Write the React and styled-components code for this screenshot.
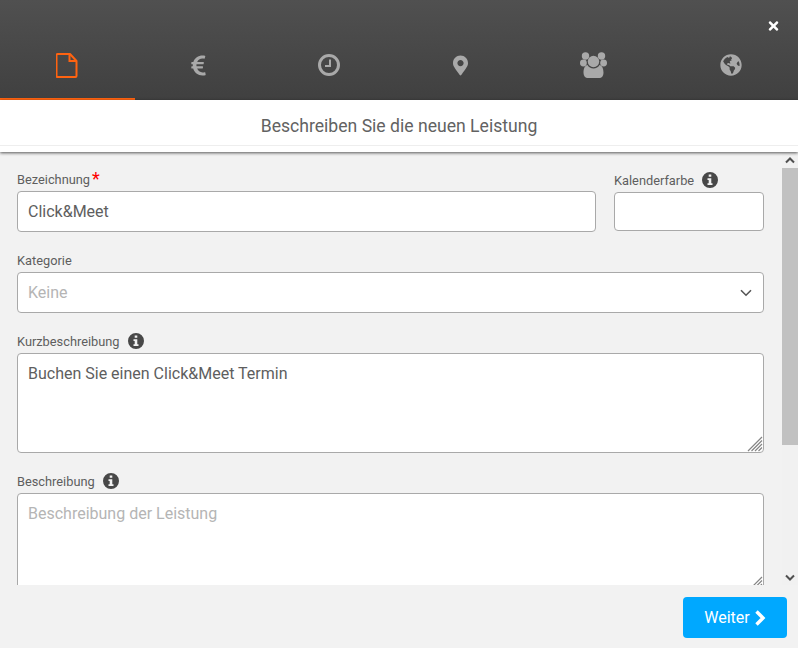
import React from "react";
import styled, { createGlobalStyle } from "styled-components";
import { FaEuroSign, FaGlobeAmericas, FaMapMarkerAlt, FaTimes } from "react-icons/fa";

const GlobalStyle = createGlobalStyle`
  html, body {
    margin: 0;
    padding: 0;
    background: #f2f2f2;
  }
  * {
    box-sizing: border-box;
  }
`;

const Page = styled.div`
  width: 798px;
  height: 648px;
  display: flex;
  flex-direction: column;
  overflow: hidden;
  position: relative;
  font-family: Roboto, "Liberation Sans", sans-serif;
  color: #5e5e5e;
  background: #f2f2f2;
`;

const Header = styled.header`
  height: 100px;
  flex: none;
  display: flex;
  align-items: flex-end;
  background: linear-gradient(#505050, #404040);
`;

const Tab = styled.div`
  flex: 1 1 auto;
  height: 70px;
  display: flex;
  justify-content: center;
  padding-top: 22px;
  color: ${(props) => (props.$active ? "#ff6310" : "#a9a9a9")};
  border-bottom: 2px solid ${(props) => (props.$active ? "#ff6310" : "transparent")};
`;

const TabIcon = styled.span`
  width: ${(props) => props.$width}px;
  height: 26px;
  display: flex;
  align-items: center;
  justify-content: center;
`;

const CloseButton = styled.button`
  position: absolute;
  top: 19px;
  right: 18px;
  width: 13px;
  height: 14px;
  padding: 0;
  border: 0;
  background: none;
  color: #fff;
  display: flex;
  align-items: center;
  justify-content: center;
`;

const SubHeader = styled.div`
  height: 52px;
  flex: none;
  padding-bottom: 6px;
  background: #fff;
  box-shadow: 0 1px 3px rgba(0, 0, 0, 0.65);
  position: relative;
  z-index: 1;
`;

const Title = styled.h1`
  height: 46px;
  margin: 0;
  padding-top: 6px;
  display: flex;
  align-items: center;
  justify-content: center;
  border-bottom: 1px solid #eee;
  font-size: 17.6px;
  font-weight: 400;
  color: #626262;
`;

const Main = styled.div`
  height: 433px;
  flex: none;
  display: flex;
`;

const Form = styled.form`
  flex: 1;
  min-width: 0;
  overflow: hidden;
  padding: 18px 18px 0 17px;
  display: flex;
  flex-direction: column;
  gap: 19px;
`;

const Row = styled.div`
  display: grid;
  grid-template-columns: 579px 150px;
  column-gap: 18px;
  align-items: center;
`;

const Field = styled.div`
  display: flex;
  flex-direction: column;
  gap: 3px;
  flex: none;
`;

const Label = styled.label`
  height: 18px;
  display: flex;
  align-items: center;
  gap: 8px;
  font-size: 12.8px;
  color: #5e5e5e;
`;

const Required = styled.span`
  margin-left: -6px;
  font-size: 18px;
  line-height: 18px;
  height: 18px;
  color: #f00;
`;

const TextInput = styled.input`
  width: 100%;
  height: ${(props) => props.$height || 41}px;
  padding: 0 10px;
  display: block;
  border: 1px solid #a9a9a9;
  border-radius: 4px;
  background: #fff;
  outline: none;
  font-family: inherit;
  font-size: 16px;
  color: #5e5e5e;
`;

const SelectBox = styled.div`
  height: 41px;
  padding: 0 11px 0 10px;
  display: flex;
  align-items: center;
  justify-content: space-between;
  border: 1px solid #a9a9a9;
  border-radius: 4px;
  background: #fff;
  font-size: 16px;
  color: #b5b5b5;
`;

const AreaWrap = styled.div`
  position: relative;
  height: 100px;
`;

const TextArea = styled.textarea`
  width: 100%;
  height: 100%;
  padding: 10px;
  display: block;
  border: 1px solid #a9a9a9;
  border-radius: 4px;
  background: #fff;
  outline: none;
  resize: none;
  font-family: inherit;
  font-size: 16px;
  line-height: 20px;
  color: #5e5e5e;
  &::placeholder {
    color: #b5b5b5;
    opacity: 1;
  }
`;

const Grip = styled.svg`
  position: absolute;
  right: 1px;
  bottom: 1px;
  pointer-events: none;
`;

const Scrollbar = styled.div`
  width: 16px;
  flex: none;
  display: flex;
  flex-direction: column;
  background: #f1f1f1;
`;

const ScrollButton = styled.div`
  height: 16px;
  flex: none;
  display: flex;
  align-items: center;
  justify-content: center;
  color: #505050;
`;

const ScrollThumb = styled.div`
  height: 277px;
  flex: none;
  background: #c1c1c1;
`;

const ScrollSpace = styled.div`
  flex: 1;
`;

const Footer = styled.footer`
  flex: 1;
  display: flex;
  align-items: flex-start;
  justify-content: flex-end;
  padding: 12px 11px 0 0;
`;

const NextButton = styled.button`
  width: 104px;
  height: 41px;
  padding: 0;
  display: flex;
  align-items: center;
  justify-content: center;
  gap: 4px;
  border: 0;
  border-radius: 4px;
  background: #00a8ff;
  color: #fff;
  font-family: inherit;
  font-size: 16px;
`;

const FileIcon = () => (
  <svg width="22" height="25" viewBox="0 0 22 25" fill="none">
    <path
      d="M1.5 1h12.5l6.5 7v15a1 1 0 0 1-1 1h-18a1 1 0 0 1-1-1v-21a1 1 0 0 1 1-1z"
      stroke="currentColor"
      strokeWidth="2"
      strokeLinejoin="round"
    />
    <path d="M13.5 1.5v6.5h6.5" stroke="currentColor" strokeWidth="2" />
  </svg>
);

const ClockIcon = () => (
  <svg width="22" height="22" viewBox="0 0 22 22" fill="none">
    <circle cx="11" cy="11" r="9.5" stroke="currentColor" strokeWidth="3" />
    <path d="M12 5.5v6.5h-5" stroke="currentColor" strokeWidth="2" />
  </svg>
);

const UsersIcon = () => (
  <svg width="27" height="26" viewBox="0 0 27 26" fill="currentColor">
    <circle cx="5.5" cy="4" r="3.7" />
    <circle cx="21.5" cy="4" r="3.7" />
    <circle cx="3.4" cy="11" r="3.4" />
    <circle cx="23.6" cy="11" r="3.4" />
    <circle cx="13.5" cy="9.5" r="5.7" />
    <path d="M3.5 21c0-5 1.5-7.5 4-8 1 2 3.5 3.5 6 3.5s5-1.5 6-3.5c2.5.5 4 3 4 8 0 3-2 5-4 5h-12c-2 0-4-2-4-5z" />
  </svg>
);

// the serif "i" of the label hints is cut out of the disc
const InfoIcon = () => (
  <svg width="16" height="16" viewBox="0 0 16 16" fill="#484848">
    <path
      fillRule="evenodd"
      d="M8 0a8 8 0 1 1 0 16A8 8 0 0 1 8 0zM6.7 2.6v2.2h2.6V2.6zM5.5 6.2v1.8h1.2v3.2H5.5V13h5v-1.8H9.3V6.2z"
    />
  </svg>
);

// thin chevron of the select box
const SelectArrow = () => (
  <svg width="12" height="8" viewBox="0 0 12 8" fill="none">
    <path d="M1 1.2l5 5 5-5" stroke="#555" strokeWidth="1.6" />
  </svg>
);

const ScrollArrow = ({ up }) => (
  <svg width="10" height="7" viewBox="0 0 10 7" fill="none">
    <path
      d={up ? "M1 5.5l4-4 4 4" : "M1 1.5l4 4 4-4"}
      stroke="currentColor"
      strokeWidth="2"
    />
  </svg>
);

const NextArrow = () => (
  <svg width="12" height="16" viewBox="0 0 12 16" fill="none">
    <path d="M2.5 1.5l6.5 6.5-6.5 6.5" stroke="currentColor" strokeWidth="3.4" />
  </svg>
);

const ResizeGrip = () => (
  <Grip width="16" height="16" viewBox="0 0 16 16" stroke="#858585" strokeWidth="1.2">
    <path d="M1 15L15 1M4.5 15L15 4.5M8 15l7-7M11.5 15l3.5-3.5" />
  </Grip>
);

const tabs = [
  { key: "details", width: 22, icon: <FileIcon />, active: true },
  { key: "price", width: 15, icon: <FaEuroSign size={23} /> },
  { key: "time", width: 22, icon: <ClockIcon /> },
  { key: "place", width: 15, icon: <FaMapMarkerAlt size={23} /> },
  { key: "staff", width: 27, icon: <UsersIcon /> },
  { key: "online", width: 22, icon: <FaGlobeAmericas size={22} /> }
];

export default function App() {
  return (
    <Page>
      <GlobalStyle />
      <Header>
        {tabs.map((tab) => (
          <Tab key={tab.key} $active={tab.active}>
            <TabIcon $width={tab.width}>{tab.icon}</TabIcon>
          </Tab>
        ))}
      </Header>
      <CloseButton type="button" aria-label="Schließen">
        <FaTimes size={14} />
      </CloseButton>
      <SubHeader>
        <Title>Beschreiben Sie die neuen Leistung</Title>
      </SubHeader>
      <Main>
        <Form>
          <Row>
            <Field>
              <Label>
                Bezeichnung
                <Required>*</Required>
              </Label>
              <TextInput readOnly defaultValue="Click&Meet" />
            </Field>
            <Field>
              <Label>
                Kalenderfarbe
                <InfoIcon />
              </Label>
              <TextInput readOnly $height={39} />
            </Field>
          </Row>
          <Field>
            <Label>Kategorie</Label>
            <SelectBox>
              Keine
              <SelectArrow />
            </SelectBox>
          </Field>
          <Field>
            <Label>
              Kurzbeschreibung
              <InfoIcon />
            </Label>
            <AreaWrap>
              <TextArea readOnly defaultValue="Buchen Sie einen Click&Meet Termin" />
              <ResizeGrip />
            </AreaWrap>
          </Field>
          <Field>
            <Label>
              Beschreibung
              <InfoIcon />
            </Label>
            <AreaWrap>
              <TextArea readOnly placeholder="Beschreibung der Leistung" />
              <ResizeGrip />
            </AreaWrap>
          </Field>
        </Form>
        <Scrollbar>
          <ScrollButton>
            <ScrollArrow up />
          </ScrollButton>
          <ScrollThumb />
          <ScrollSpace />
          <ScrollButton>
            <ScrollArrow />
          </ScrollButton>
        </Scrollbar>
      </Main>
      <Footer>
        <NextButton type="button">
          Weiter
          <NextArrow />
        </NextButton>
      </Footer>
    </Page>
  );
}
